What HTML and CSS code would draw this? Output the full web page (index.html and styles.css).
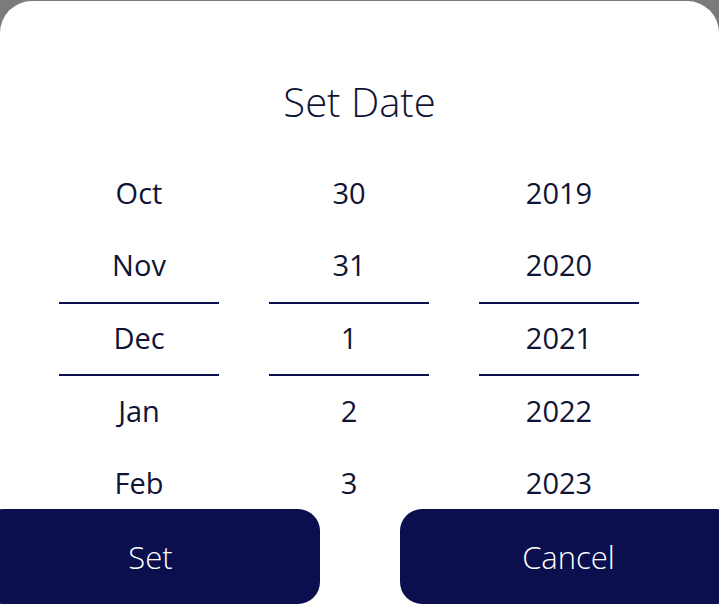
FILE: index.html
```html
<!DOCTYPE html>
<html>
<head>
  <title>Set Date</title>
  <link rel="stylesheet" href="styles.css">
</head>
<body>
  <div class="sheet">
    <h2 class="sheet-title">Set Date</h2>
    <div class="picker">
      <div class="wheel">
        <div class="wheel-item">Oct</div>
        <div class="wheel-item">Nov</div>
        <div class="wheel-item selected">Dec</div>
        <div class="wheel-item">Jan</div>
        <div class="wheel-item">Feb</div>
      </div>
      <div class="wheel">
        <div class="wheel-item">30</div>
        <div class="wheel-item">31</div>
        <div class="wheel-item selected">1</div>
        <div class="wheel-item">2</div>
        <div class="wheel-item">3</div>
      </div>
      <div class="wheel">
        <div class="wheel-item">2019</div>
        <div class="wheel-item">2020</div>
        <div class="wheel-item selected">2021</div>
        <div class="wheel-item">2022</div>
        <div class="wheel-item">2023</div>
      </div>
    </div>
    <div class="actions">
      <button class="action-button">Set</button>
      <button class="action-button">Cancel</button>
    </div>
  </div>
</body>
</html>
```

FILE: styles.css
```css
* {
  box-sizing: border-box;
  margin: 0;
  padding: 0;
}
body {
  width: 719px;
  height: 605px;
  overflow: hidden;
  background: #7b7b7b;
  font-family: 'Open Sans', 'Noto Sans', sans-serif;
  color: #0f1435;
}
.sheet {
  margin-top: 1px;
  height: 604px;
  background: #fff;
  border-radius: 32px 32px 0 0;
  display: flex;
  flex-direction: column;
  padding-top: 73px;
}
.sheet-title {
  font-size: 40px;
  font-weight: 300;
  line-height: 56px;
  text-align: center;
}
.picker {
  margin-top: 28px;
  height: 351px;
  overflow: hidden;
  display: flex;
  gap: 50px;
  padding-left: 59px;
}
.wheel {
  width: 160px;
  display: flex;
  flex-direction: column;
}
.wheel-item {
  height: 72px;
  line-height: 69px;
  text-align: center;
  font-size: 29px;
  font-weight: 500;
  flex-shrink: 0;
}
.wheel-item.selected {
  height: 74px;
  line-height: 68px;
  border-top: 2px solid #0b0f4d;
  border-bottom: 2px solid #0b0f4d;
}
.actions {
  display: flex;
  justify-content: center;
  gap: 80px;
  height: 95px;
}
.action-button {
  flex-shrink: 0;
  width: 338px;
  height: 95px;
  border: none;
  border-radius: 22px;
  background: #0b0f4d;
  color: #fff;
  font-family: inherit;
  font-size: 31px;
  font-weight: 300;
}
```
